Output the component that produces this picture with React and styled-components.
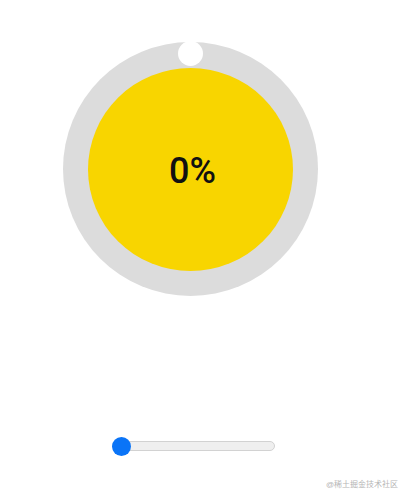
import React from 'react';
import styled, { createGlobalStyle } from 'styled-components';

const GlobalStyle = createGlobalStyle`
  html, body {
    margin: 0;
    padding: 0;
    background: #fff;
    font-family: "Liberation Sans", Arial, sans-serif;
  }
`

const Page = styled.div`
  position: relative;
  width: 407px;
  height: 494px;
  display: flex;
  flex-direction: column;
  align-items: flex-start;
  padding: 42px 0 0 63px;
  box-sizing: border-box;
  overflow: hidden;
`

const Ring = styled.div`
  position: relative;
  width: 255px;
  height: 254px;
  border-radius: 50%;
  background: #dcdcdc;
  display: flex;
  align-items: center;
  justify-content: center;
`

const Face = styled.div`
  width: 205px;
  height: 203px;
  border-radius: 50%;
  background: #f8d500;
  display: flex;
  align-items: center;
  justify-content: center;
`

const Percent = styled.span`
  font-family: Roboto, "Liberation Sans", sans-serif;
  font-size: 36px;
  font-weight: 500;
  color: #111;
  margin: 4px 0 0 4px;
`

const Knob = styled.div`
  position: absolute;
  top: -1px;
  left: 115px;
  width: 25px;
  height: 25px;
  border-radius: 50%;
  background: #fff;
`

const Slider = styled.div`
  position: relative;
  margin: 145px 0 0 49px;
  width: 163px;
  height: 10px;
  border-radius: 5px;
  background: #efefef;
  border: 1px solid #d2d2d2;
  box-sizing: border-box;
`

const Thumb = styled.div`
  position: absolute;
  top: -5px;
  left: -1px;
  width: 19px;
  height: 19px;
  border-radius: 50%;
  background: #0a74f7;
`

const Watermark = styled.div`
  position: absolute;
  right: 9px;
  bottom: 5px;
  font-size: 8px;
  color: #b5b5b5;
  font-family: "Liberation Sans", "Noto Sans CJK SC", sans-serif;
`

export default function App() {
  const value = 0;
  return (
    <>
      <GlobalStyle />
      <Page>
        <Ring>
          <Face>
            <Percent>{value}%</Percent>
          </Face>
          <Knob />
        </Ring>
        <Slider>
          <Thumb style={{ left: `${value - 1}px` }} />
        </Slider>
        <Watermark>@稀土掘金技术社区</Watermark>
      </Page>
    </>
  );
}
